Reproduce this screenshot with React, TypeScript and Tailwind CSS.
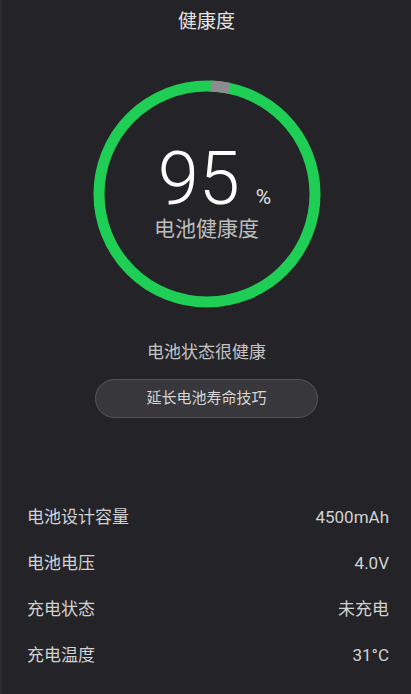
import React from 'react';

const R = 108;
const C = 2 * Math.PI * R;

const rows: { label: string; value: string }[] = [
  { label: '电池设计容量', value: '4500mAh' },
  { label: '电池电压', value: '4.0V' },
  { label: '充电状态', value: '未充电' },
  { label: '充电温度', value: '31°C' },
];

const HealthRing: React.FC = () => {
  const grayStart = (2 / 360) * C;
  const grayLen = (10 / 360) * C;
  return (
    <svg className="absolute inset-0" width="240" height="240" viewBox="0 0 240 240">
      <circle cx="120" cy="120" r={R} fill="none" stroke="#1fce55" strokeWidth="11" />
      <circle
        cx="120"
        cy="120"
        r={R}
        fill="none"
        stroke="#8c8c8e"
        strokeWidth="11"
        strokeDasharray={`${grayLen} ${C}`}
        strokeDashoffset={-grayStart}
        transform="rotate(-90 120 120)"
      />
    </svg>
  );
};

export default function App() {
  return (
    <div
      className="w-[411px] h-[694px] bg-[#242428] border-l-2 border-[#2c2c33] overflow-hidden"
      style={{ fontFamily: 'Roboto, "Noto Sans CJK SC", sans-serif' }}
    >
      {/* Title */}
      <div className="h-[44px] flex items-center justify-center text-[19px] text-[#e4e4e4]">
        健康度
      </div>

      {/* Ring */}
      <div className="relative w-[240px] h-[240px] mx-auto mt-[30px] pt-[68px]">
        <HealthRing />
        <div className="relative flex flex-col items-center">
          <div className="flex items-baseline justify-center pl-[16px]">
            <span className="text-[74px] leading-none font-light text-white">95</span>
            <span className="ml-[16px] text-[21px] leading-none text-[#e0e0e0]">%</span>
          </div>
          <div className="mt-[5px] text-[21px] leading-[17px] text-[#bdbdbd]">电池健康度</div>
        </div>
      </div>

      {/* Status */}
      <div className="mt-[26px] text-center text-[17px] leading-[24px] text-[#c4c4c4]">
        电池状态很健康
      </div>
      <div className="mt-[15px] flex justify-center">
        <button
          type="button"
          className="w-[223px] h-[39px] rounded-full bg-[#38383c] border border-[#56565a] text-[15px] text-[#d6d6d6]"
        >
          延长电池寿命技巧
        </button>
      </div>

      {/* Details */}
      <div className="mt-[77px] px-[22px] pl-[25px]">
        {rows.map((r) => (
          <div key={r.label} className="h-[46px] flex items-center justify-between text-[17px] text-[#d2d2d2]">
            <span>{r.label}</span>
            <span>{r.value}</span>
          </div>
        ))}
      </div>
    </div>
  );
}
